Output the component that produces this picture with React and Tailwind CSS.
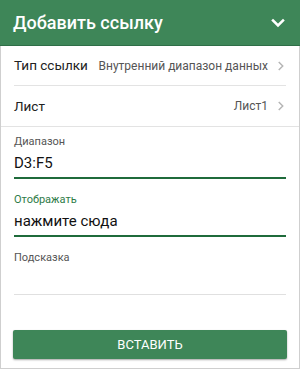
import React from 'react';

const Chevron = ({ className }) => (
    <svg viewBox="0 0 24 24" className={className} fill="none" stroke="currentColor" strokeWidth="2.5" strokeLinecap="square">
        <path d="M9 6l6 6-6 6" />
    </svg>
);

const PickerRow = ({ label, value, divider }) => (
    <div className={`mx-[13px] h-[40px] flex items-center justify-between whitespace-nowrap ${divider ? 'border-b border-[#e3e3e3]' : ''}`}>
        <span className="text-[13.5px] text-[#222]">{label}</span>
        <div className="flex items-center gap-[6px]">
            <span className="text-[12px] text-[#555]">{value}</span>
            <Chevron className="w-[14px] h-[14px] text-[#b5b5b5] -mr-[2px]" />
        </div>
    </div>
);

const Field = ({ label, value, active }) => (
    <div className="px-[13px]">
        <div className={`text-[11px] leading-[14px] ${active ? 'text-[#2e7b47]' : 'text-[#555]'}`}>{label}</div>
        <div className={`h-[30px] flex items-center text-[15px] text-[#111] ${value ? 'border-b-2 border-[#1f6b3b]' : 'border-b border-[#e0e0e0]'}`}>
            {value}
        </div>
    </div>
);

export default function App() {
    return (
        <div className="w-[300px] h-[369px] flex flex-col bg-white" style={{ fontFamily: 'Roboto, "Noto Sans", sans-serif' }}>
            <div className="h-[46px] shrink-0 bg-[#3e8658] border-b border-[#2f6e47] flex items-center justify-between pl-[13px] pr-[12px]">
                <h1 className="text-[18px] font-medium text-white">Добавить ссылку</h1>
                <svg viewBox="0 0 24 24" className="w-[20px] h-[20px] text-white" fill="none" stroke="currentColor" strokeWidth="3" strokeLinecap="square">
                    <path d="M6 9l6 6 6-6" />
                </svg>
            </div>
            <div className="flex-1 flex flex-col border-x border-b border-[#cfcfcf]">
                <PickerRow label="Тип ссылки" value="Внутренний диапазон данных" divider />
                <PickerRow label="Лист" value="Лист1" />
                <div className="border-t border-[#e3e3e3] pt-[8px] flex flex-col gap-[14px]">
                    <Field label="Диапазон" value="D3:F5" />
                    <Field label="Отображать" value="нажмите сюда" active />
                    <Field label="Подсказка" value="" />
                </div>
                <div className="px-[12px] mt-auto mb-[9px]">
                    <button className="w-full h-[29px] bg-[#3e8658] text-white text-[13px] rounded-[2px] shadow-[0_1px_2px_rgba(0,0,0,0.35)]">
                        ВСТАВИТЬ
                    </button>
                </div>
            </div>
        </div>
    );
}
